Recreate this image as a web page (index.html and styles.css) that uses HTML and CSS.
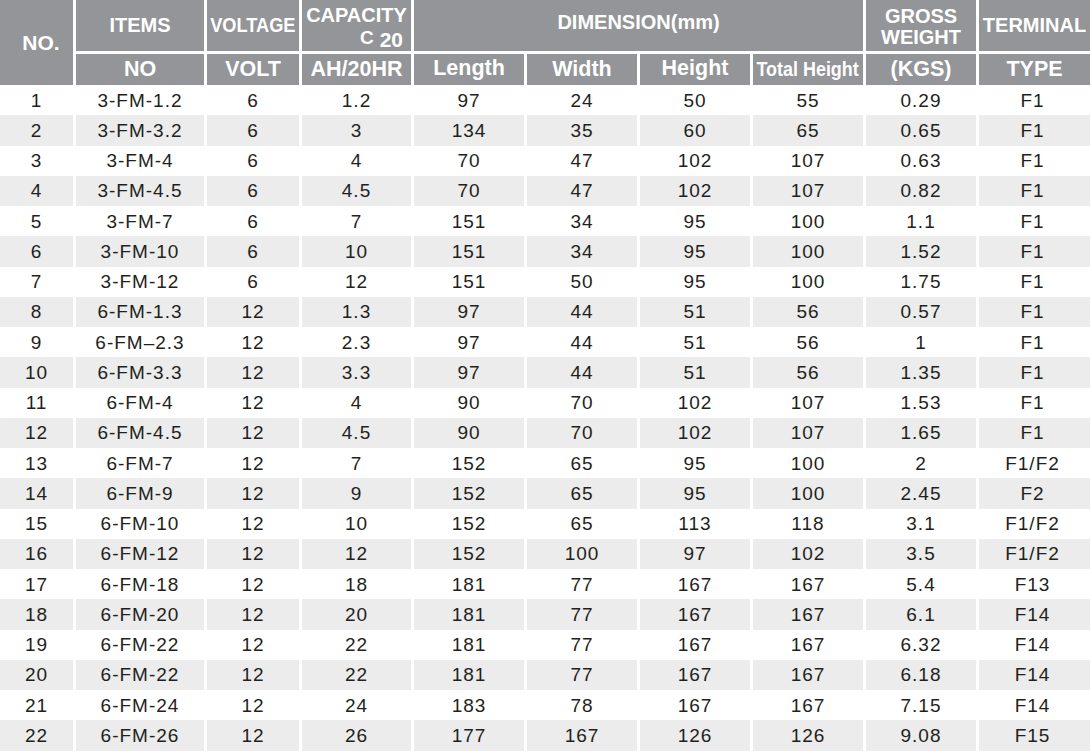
FILE: index.html
```html
<!DOCTYPE html>
<html>
<head>
<meta charset="utf-8">
<title>Battery Specifications</title>
<link rel="stylesheet" href="styles.css">
</head>
<body>
<div class="spec">
  <div class="hd hd-no">NO.</div>
  <div class="hd hd-top">ITEMS</div>
  <div class="hd hd-top"><span class="squeeze">VOLTAGE</span></div>
  <div class="hd hd-top hd-two hd-cap"><span>CAPACITY</span><span class="cap-sub">C<b>20</b></span></div>
  <div class="hd hd-top hd-dim">DIMENSION(mm)</div>
  <div class="hd hd-top hd-two"><span>GROSS</span><span>WEIGHT</span></div>
  <div class="hd hd-top">TERMINAL</div>

  <div class="hd hd-sub">NO</div>
  <div class="hd hd-sub">VOLT</div>
  <div class="hd hd-sub">AH/20HR</div>
  <div class="hd hd-sub hd-up">Length</div>
  <div class="hd hd-sub">Width</div>
  <div class="hd hd-sub hd-up">Height</div>
  <div class="hd hd-sub hd-small"><span class="squeeze2">Total Height</span></div>
  <div class="hd hd-sub">(KGS)</div>
  <div class="hd hd-sub">TYPE</div>

  <div class="row"><div>1</div><div>3-FM-1.2</div><div>6</div><div>1.2</div><div>97</div><div>24</div><div>50</div><div>55</div><div>0.29</div><div class="t">F1</div></div>
  <div class="row alt"><div>2</div><div>3-FM-3.2</div><div>6</div><div>3</div><div>134</div><div>35</div><div>60</div><div>65</div><div>0.65</div><div class="t">F1</div></div>
  <div class="row"><div>3</div><div>3-FM-4</div><div>6</div><div>4</div><div>70</div><div>47</div><div>102</div><div>107</div><div>0.63</div><div class="t">F1</div></div>
  <div class="row alt"><div>4</div><div>3-FM-4.5</div><div>6</div><div>4.5</div><div>70</div><div>47</div><div>102</div><div>107</div><div>0.82</div><div class="t">F1</div></div>
  <div class="row"><div>5</div><div>3-FM-7</div><div>6</div><div>7</div><div>151</div><div>34</div><div>95</div><div>100</div><div>1.1</div><div class="t">F1</div></div>
  <div class="row alt"><div>6</div><div>3-FM-10</div><div>6</div><div>10</div><div>151</div><div>34</div><div>95</div><div>100</div><div>1.52</div><div class="t">F1</div></div>
  <div class="row"><div>7</div><div>3-FM-12</div><div>6</div><div>12</div><div>151</div><div>50</div><div>95</div><div>100</div><div>1.75</div><div class="t">F1</div></div>
  <div class="row alt"><div>8</div><div>6-FM-1.3</div><div>12</div><div>1.3</div><div>97</div><div>44</div><div>51</div><div>56</div><div>0.57</div><div class="t">F1</div></div>
  <div class="row"><div>9</div><div>6-FM–2.3</div><div>12</div><div>2.3</div><div>97</div><div>44</div><div>51</div><div>56</div><div>1</div><div class="t">F1</div></div>
  <div class="row alt"><div>10</div><div>6-FM-3.3</div><div>12</div><div>3.3</div><div>97</div><div>44</div><div>51</div><div>56</div><div>1.35</div><div class="t">F1</div></div>
  <div class="row"><div>11</div><div>6-FM-4</div><div>12</div><div>4</div><div>90</div><div>70</div><div>102</div><div>107</div><div>1.53</div><div class="t">F1</div></div>
  <div class="row alt"><div>12</div><div>6-FM-4.5</div><div>12</div><div>4.5</div><div>90</div><div>70</div><div>102</div><div>107</div><div>1.65</div><div class="t">F1</div></div>
  <div class="row"><div>13</div><div>6-FM-7</div><div>12</div><div>7</div><div>152</div><div>65</div><div>95</div><div>100</div><div>2</div><div class="t">F1/F2</div></div>
  <div class="row alt"><div>14</div><div>6-FM-9</div><div>12</div><div>9</div><div>152</div><div>65</div><div>95</div><div>100</div><div>2.45</div><div class="t">F2</div></div>
  <div class="row"><div>15</div><div>6-FM-10</div><div>12</div><div>10</div><div>152</div><div>65</div><div>113</div><div>118</div><div>3.1</div><div class="t">F1/F2</div></div>
  <div class="row alt"><div>16</div><div>6-FM-12</div><div>12</div><div>12</div><div>152</div><div>100</div><div>97</div><div>102</div><div>3.5</div><div class="t">F1/F2</div></div>
  <div class="row"><div>17</div><div>6-FM-18</div><div>12</div><div>18</div><div>181</div><div>77</div><div>167</div><div>167</div><div>5.4</div><div class="t">F13</div></div>
  <div class="row alt"><div>18</div><div>6-FM-20</div><div>12</div><div>20</div><div>181</div><div>77</div><div>167</div><div>167</div><div>6.1</div><div class="t">F14</div></div>
  <div class="row"><div>19</div><div>6-FM-22</div><div>12</div><div>22</div><div>181</div><div>77</div><div>167</div><div>167</div><div>6.32</div><div class="t">F14</div></div>
  <div class="row alt"><div>20</div><div>6-FM-22</div><div>12</div><div>22</div><div>181</div><div>77</div><div>167</div><div>167</div><div>6.18</div><div class="t">F14</div></div>
  <div class="row"><div>21</div><div>6-FM-24</div><div>12</div><div>24</div><div>183</div><div>78</div><div>167</div><div>167</div><div>7.15</div><div class="t">F14</div></div>
  <div class="row alt"><div>22</div><div>6-FM-26</div><div>12</div><div>26</div><div>177</div><div>167</div><div>126</div><div>126</div><div>9.08</div><div class="t">F15</div></div>
</div>
</body>
</html>
```

FILE: styles.css
```css
html, body {
  margin: 0;
  padding: 0;
  background: #ffffff;
}

.spec {
  display: grid;
  width: 1090px;
  grid-template-columns: 73px 128px 92px 109px 110px 110px 110px 110px 110px 111px;
  grid-template-rows: 51px 34px repeat(22, 30.25px);
  column-gap: 3px;
  font-family: "Liberation Sans", Arial, sans-serif;
}

.hd {
  background: #939598;
  color: #ffffff;
  font-weight: bold;
  font-size: 20px;
  display: flex;
  align-items: center;
  justify-content: center;
  text-align: center;
  white-space: nowrap;
  overflow: visible;
}

.hd-no {
  grid-row: 1 / 3;
  font-size: 21px;
  padding-left: 9px;
}

.hd-top {
  padding-bottom: 1px;
}

.hd-dim {
  grid-column: 5 / 9;
  padding-bottom: 6px;
}

.hd-two {
  flex-direction: column;
  line-height: 21px;
  padding-bottom: 0;
  padding-top: 2px;
}

.hd-cap {
  align-items: stretch;
}

.hd-cap .cap-sub {
  text-align: right;
  padding-right: 8px;
  font-size: 19px;
}

.hd-cap .cap-sub b {
  font-size: 21px;
  position: relative;
  top: 3px;
  margin-left: 6px;
}

.hd-sub {
  margin-top: 3px;
  font-size: 21.5px;
}

.hd-up {
  padding-bottom: 3px;
}

.squeeze {
  display: inline-block;
  transform: scaleX(0.91);
}

.squeeze2 {
  display: inline-block;
  font-size: 19.5px;
  transform: scaleX(0.92);
}

.row {
  display: contents;
}

.row > div {
  display: flex;
  align-items: center;
  justify-content: center;
  font-size: 19px;
  letter-spacing: 1px;
  color: #231f20;
  background: #ffffff;
  padding-top: 1px;
}

.row.alt > div {
  background: #ebeceb;
}

.row > .t {
  padding-right: 4px;
}
```
